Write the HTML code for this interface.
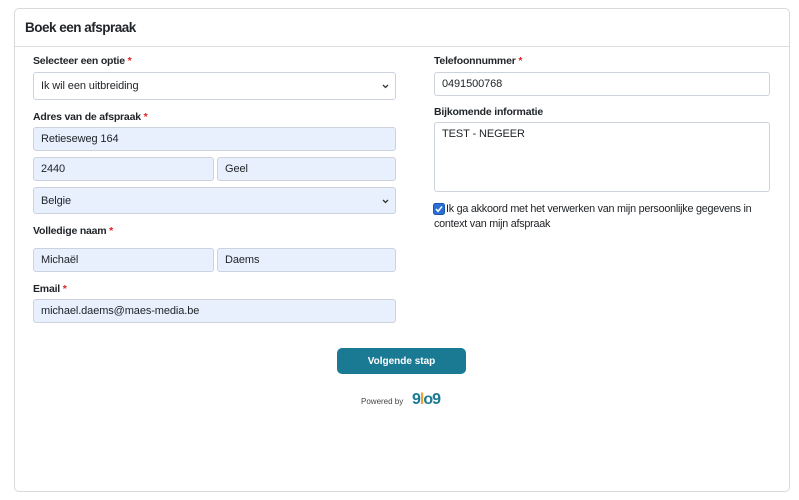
<!DOCTYPE html>
<html><head><style>
*{box-sizing:border-box;margin:0;padding:0}
body{width:799px;height:500px;background:#fff;font-family:"Liberation Sans",sans-serif;position:relative;overflow:hidden;color:#212529}
.card{position:absolute;left:14px;top:8px;width:776px;height:484px;border:1px solid #d9d9d9;border-radius:5px}
.hd{position:absolute;left:0;top:0;right:0;height:38px;border-bottom:1px solid #dcdcdc;background:#fff;border-radius:5px 5px 0 0}
.hd h1{position:absolute;left:10px;top:11px;font-size:13.5px;font-weight:bold;letter-spacing:-0.5px}
.a{position:absolute}
.lb{position:absolute;font-size:10.5px;font-weight:bold;letter-spacing:-0.2px}
.lb i{color:#d22;font-style:normal}
.in{position:absolute;height:24px;border:1px solid #ccd3dd;border-radius:3px;background:#e8f0fe;font-size:11px;padding:5px 7px;letter-spacing:-0.1px}
.w{background:#fff}
</style></head><body>
<div class="card"><div class="hd"><h1>Boek een afspraak</h1></div></div>
<div class="lb" style="left:33px;top:55px">Selecteer een optie <i>*</i></div>
<div class="in w" style="left:33px;top:72px;width:363px;height:28px;padding-top:7px">Ik wil een uitbreiding<svg class="a" style="right:6px;top:11px" width="7" height="5"><path d="M1 1L3.5 3.5L6 1" stroke="#333" stroke-width="1.3" fill="none"/></svg></div>
<div class="lb" style="left:33px;top:111px">Adres van de afspraak <i>*</i></div>
<div class="in" style="left:33px;top:127px;width:363px">Retieseweg 164</div>
<div class="in" style="left:33px;top:157px;width:181px">2440</div>
<div class="in" style="left:217px;top:157px;width:179px">Geel</div>
<div class="in" style="left:33px;top:187px;width:363px;height:27px;padding-top:7px">Belgie<svg class="a" style="right:6px;top:11px" width="7" height="5"><path d="M1 1L3.5 3.5L6 1" stroke="#333" stroke-width="1.3" fill="none"/></svg></div>
<div class="lb" style="left:33px;top:225px">Volledige naam <i>*</i></div>
<div class="in" style="left:33px;top:248px;width:181px">Michaël</div>
<div class="in" style="left:217px;top:248px;width:179px">Daems</div>
<div class="lb" style="left:33px;top:283px">Email <i>*</i></div>
<div class="in" style="left:33px;top:299px;width:363px">michael.daems@maes-media.be</div>
<div class="lb" style="left:434px;top:55px">Telefoonnummer <i>*</i></div>
<div class="in w" style="left:434px;top:72px;width:336px">0491500768</div>
<div class="lb" style="left:434px;top:106px">Bijkomende informatie</div>
<div class="in w" style="left:434px;top:122px;width:336px;height:70px">TEST - NEGEER</div>
<svg class="a" style="left:433px;top:203px" width="12" height="12"><rect x="0.5" y="0.5" width="11" height="11" rx="2" fill="#2a6fd6" stroke="#1a56b0"/><path d="M3 6L5 8.3L9 3.5" stroke="#fff" stroke-width="1.5" fill="none"/></svg>
<div class="a" style="left:434px;top:202px;width:345px;font-size:10.8px;line-height:15px;text-indent:12px;letter-spacing:-0.25px">Ik ga akkoord met het verwerken van mijn persoonlijke gegevens in context van mijn afspraak</div>
<div class="a" style="left:337px;top:348px;width:129px;height:26px;background:#1b7a93;border-radius:5px;color:#fff;font-size:10px;font-weight:bold;text-align:center;line-height:27px">Volgende stap</div>
<div class="a" style="left:361px;top:397px;font-size:8px;color:#444">Powered by</div>
<div class="a" style="left:412px;top:391px;font-size:16px;font-weight:bold;color:#1b7a93;letter-spacing:-1px">9<span style="color:#e9a23b">l</span>o9</div>
</body></html>
